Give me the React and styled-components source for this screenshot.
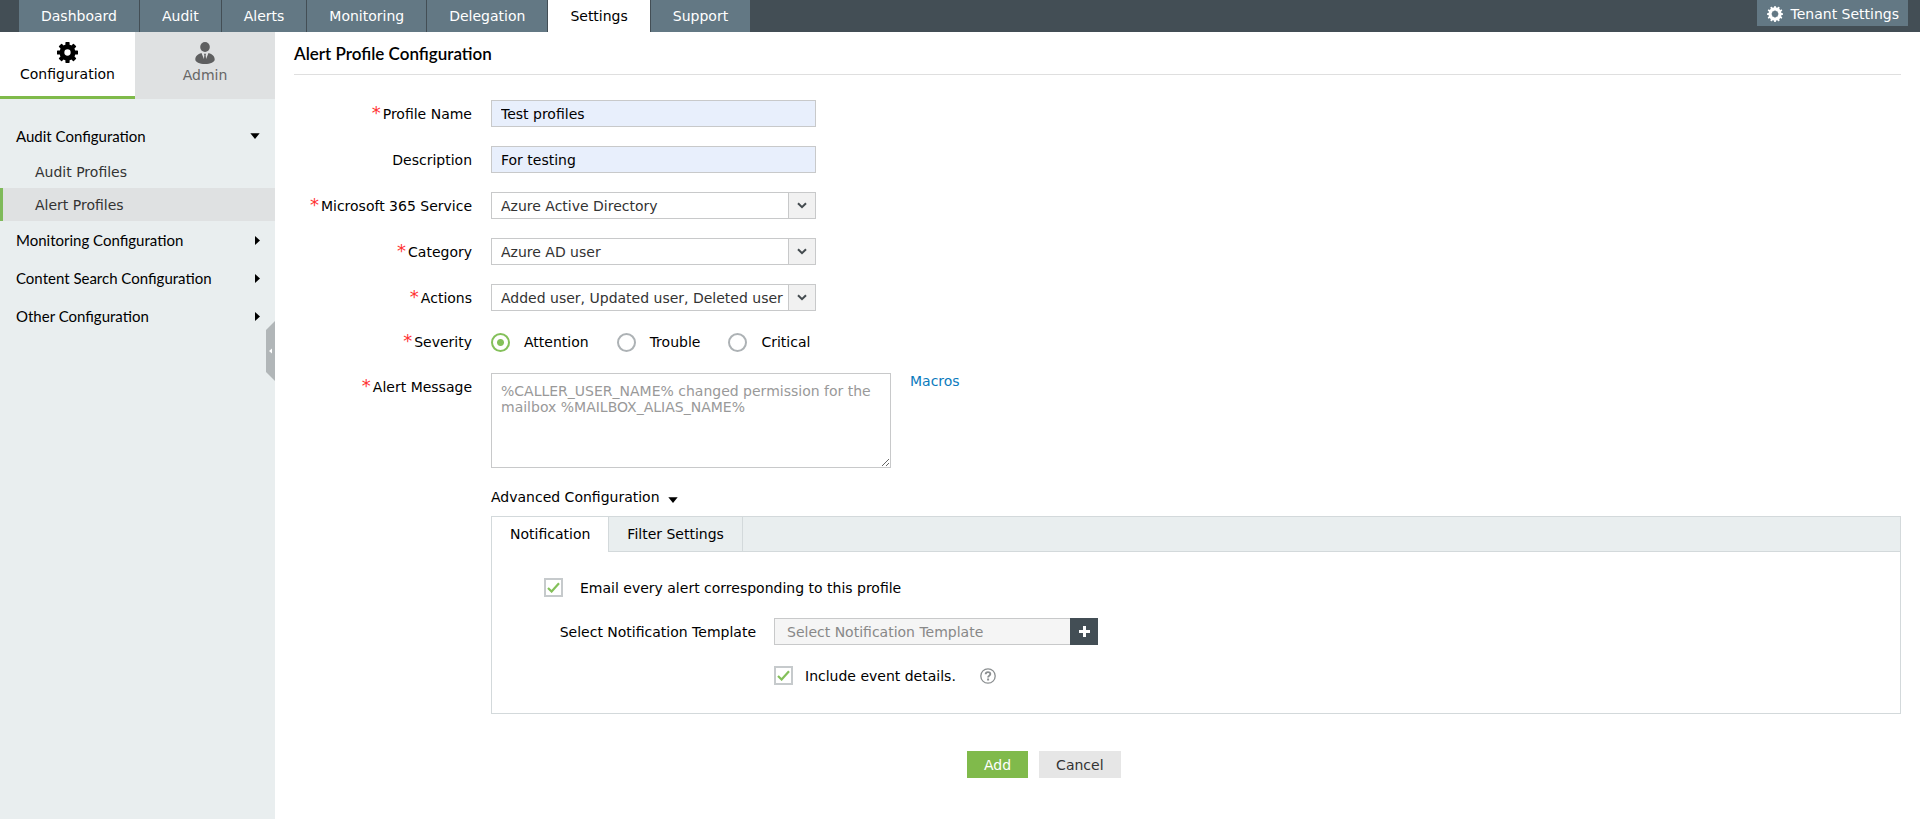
import React, { useState } from "react";
import styled, { createGlobalStyle, css } from "styled-components";

const GlobalStyle = createGlobalStyle`
  *, *::before, *::after { box-sizing: border-box; }
  body {
    margin: 0;
    background: #fff;
    color: #000;
    font: 14px/16px "DejaVu Sans", Verdana, sans-serif;
  }
  button, input, select, textarea { font: inherit; color: inherit; margin: 0; }
  button { border: 0; background: none; padding: 0; cursor: pointer; }
`;

const Page = styled.div`
  display: flex;
  flex-direction: column;
  min-height: 100vh;
`;

const TopBar = styled.header`
  display: flex;
  align-items: flex-start;
  justify-content: space-between;
  height: 32px;
  padding: 0 12px 0 19px;
  background: #434e55;
`;

const MainTabs = styled.nav`
  display: flex;
  gap: 1px;
  height: 100%;
`;

const MainTab = styled.a`
  display: flex;
  align-items: center;
  justify-content: center;
  padding: 0 22px;
  color: ${(p) => (p.$active ? "#000" : "#fff")};
  background: ${(p) => (p.$active ? "#fff" : "#637884")};
  text-decoration: none;
`;

const TenantButton = styled.button`
  display: flex;
  align-items: center;
  gap: 8px;
  height: 26px;
  padding: 2px 9px 0 10px;
  background: #637884;
  color: #fff;
`;

const Body = styled.div`
  display: flex;
  flex: 1;
`;

const Sidebar = styled.aside`
  position: relative;
  flex: 0 0 275px;
  background: #e9eeef;
`;

const SideTabs = styled.div`
  display: grid;
  grid-template-columns: 135px 1fr;
  height: 67px;
`;

const SideTab = styled.button`
  display: flex;
  flex-direction: column;
  align-items: center;
  gap: 3px;
  padding-top: 10px;
  color: #666;
  background: #dfe1e2;
  ${(p) =>
    p.$active &&
    css`
      color: #000;
      background: #fff;
      border-bottom: 3px solid #7fba4a;
    `}
`;

const SideNav = styled.nav`
  padding-top: 18px;
`;

const Group = styled.button`
  display: flex;
  align-items: center;
  justify-content: space-between;
  width: 100%;
  height: 38px;
  padding: 0 15px 0 16px;
  font-family: Lato, sans-serif;
  font-size: 15px;
`;

const SubItem = styled.a`
  display: flex;
  align-items: center;
  height: 33px;
  padding-left: 32px;
  border-left: 3px solid ${(p) => (p.$active ? "#7fba5a" : "transparent")};
  background: ${(p) => (p.$active ? "#dfe1e2" : "transparent")};
  color: #333;
  text-decoration: none;
`;

const Collapse = styled.button`
  position: absolute;
  top: 289px;
  right: 0;
  display: flex;
`;

const Content = styled.main`
  flex: 1;
  min-width: 0;
  padding: 11px 19px 40px;
`;

const Title = styled.h1`
  margin: 0;
  padding-bottom: 9px;
  border-bottom: 1px solid #dfdfdf;
  font: 600 17px/22px Lato, sans-serif;
`;

const Form = styled.form`
  display: flex;
  flex-direction: column;
  gap: 19px;
  margin-top: 25px;
`;

const Row = styled.div`
  display: grid;
  grid-template-columns: 178px minmax(0, 1fr);
  column-gap: 19px;
  align-items: ${(p) => (p.$top ? "start" : "center")};
`;

const Label = styled.label`
  padding-top: ${(p) => (p.$top ? "6px" : "0")};
  text-align: right;
  white-space: nowrap;
`;

const Star = styled.span`
  margin-right: 2px;
  color: #f33;
  font-size: 18px;
  line-height: 1px;
`;

const fieldBox = css`
  height: 27px;
  border: 1px solid #c8c9ca;
  border-radius: 0;
  outline: 0;
`;

const TextInput = styled.input`
  ${fieldBox}
  width: 325px;
  padding: 0 9px;
  background: #e8effc;
`;

const SelectBox = styled.div`
  ${fieldBox}
  display: grid;
  grid-template-columns: minmax(0, 1fr) 27px;
  width: 325px;
`;

const NativeSelect = styled.select`
  grid-area: 1 / 1 / 2 / 3;
  appearance: none;
  width: 100%;
  padding: 0 27px 0 9px;
  border: 0;
  outline: 0;
  background: #fff;
  color: #333;
`;

const SelectArrow = styled.span`
  grid-area: 1 / 2;
  z-index: 1;
  display: flex;
  align-items: center;
  justify-content: center;
  border-left: 1px solid #c8c9ca;
  background: #f1f1f1;
  pointer-events: none;
`;

const Radios = styled.div`
  display: flex;
  align-items: center;
  gap: 28px;
  height: 24px;
`;

const Choice = styled.label`
  display: flex;
  align-items: center;
  gap: ${(p) => p.$gap}px;
`;

const Radio = styled.input`
  appearance: none;
  width: 19px;
  height: 19px;
  border: 2px solid #adb2b5;
  border-radius: 50%;
  background: #fff;
  &:checked {
    border-color: #84c05a;
    background: radial-gradient(circle, #84c05a 3px, #fff 4px);
  }
`;

const MessageLine = styled.div`
  display: flex;
  align-items: flex-start;
  gap: 19px;
`;

const Message = styled.textarea`
  width: 400px;
  height: 95px;
  padding: 9px;
  border: 1px solid #c8c9ca;
  outline: 0;
  line-height: 16px;
  &::placeholder { color: #999; }
`;

const TextLink = styled.a`
  color: #0b7bbd;
  text-decoration: none;
`;

const Advanced = styled.section`
  margin-left: 197px;
`;

const AdvancedToggle = styled.button`
  display: flex;
  align-items: center;
  gap: 8px;
  height: 20px;
  margin-bottom: 9px;
  & > svg { margin-top: 5px; }
`;

const Panel = styled.div`
  border: 1px solid #d3d9db;
`;

const PanelTabs = styled.div`
  display: flex;
  height: 35px;
  background: #e9eeef;
  box-shadow: inset 0 -1px #d3d9db;
`;

const PanelTab = styled.button`
  padding: 0 18px 2px;
  border-right: 1px solid #d3d9db;
  background: ${(p) => (p.$active ? "#fff" : "transparent")};
`;

const PanelBody = styled.div`
  display: flex;
  flex-direction: column;
  gap: 21px;
  padding: 26px 52px 28px;
`;

const TemplateRow = styled.div`
  display: grid;
  grid-template-columns: 212px minmax(0, 1fr);
  column-gap: 18px;
  align-items: center;
`;

const TemplateField = styled.div`
  display: flex;
`;

const TemplateInput = styled.input`
  ${fieldBox}
  width: 296px;
  padding: 0 12px;
  border-right: 0;
  background: #f5f5f5;
  &::placeholder { color: #888; }
`;

const PlusButton = styled.button`
  display: flex;
  align-items: center;
  justify-content: center;
  width: 28px;
  height: 27px;
  background: #434e55;
`;

const IncludeLine = styled.div`
  display: flex;
  grid-column: 2;
  align-items: center;
  gap: 24px;
`;

const TickWrap = styled.span`
  display: grid;
  width: 19px;
  height: 19px;
  place-items: center;
  & > * { grid-area: 1 / 1; }
  & > svg { pointer-events: none; z-index: 1; }
  & > input:not(:checked) + svg { visibility: hidden; }
`;

const TickInput = styled.input`
  appearance: none;
  width: 19px;
  height: 19px;
  border: 2px solid #c6cacc;
  background: #fff;
`;

const Actions = styled.div`
  display: flex;
  gap: 11px;
  margin: 18px 0 0 673px;
`;

const ActionButton = styled.button`
  height: 27px;
  padding: 0 17px;
  color: ${(p) => (p.$primary ? "#fff" : "#333")};
  background: ${(p) => (p.$primary ? "#80ba4b" : "#e6e6e6")};
`;

function Cog({ size, teeth, tooth, body, hole, color }) {
  return (
    <svg width={size} height={size} viewBox="-10 -10 20 20" aria-hidden="true">
      {Array.from({ length: teeth }, (_, i) => (
        <rect
          key={i}
          x={-tooth / 2}
          y="-10"
          width={tooth}
          height="6"
          rx="0.6"
          fill={color}
          transform={`rotate(${(360 / teeth) * i})`}
        />
      ))}
      <circle r={(body + hole) / 2} fill="none" stroke={color} strokeWidth={body - hole} />
    </svg>
  );
}

const Person = () => (
  <svg width="20" height="22" viewBox="0 0 20 22" fill="#5e5f60" aria-hidden="true">
    <ellipse cx="10" cy="5" rx="4.800" ry="5" />
    <path d="M6.500 11C2.600 12 .3 14.400.3 17.500c0 2.600 4.300 4.500 9.700 4.500s9.700-1.900 9.700-4.500c0-3.100-2.300-5.500-6.200-6.500l-2.400 6-.5-4 .6-1.300H8.800l.6 1.300-.5 4z" />
  </svg>
);

const CaretDown = () => (
  <svg width="10" height="6" viewBox="0 0 10 6" aria-hidden="true">
    <path d="M.3.3h9.400L5 6z" fill="#000" />
  </svg>
);

const CaretRight = () => (
  <svg width="5" height="9" viewBox="0 0 5 9" aria-hidden="true">
    <path d="M0 0l5 4.500L0 9z" fill="#000" />
  </svg>
);

const Chevron = () => (
  <svg width="10" height="7" viewBox="0 0 10 7" aria-hidden="true">
    <path d="M1 1.200l4 4 4-4" fill="none" stroke="#444b4f" strokeWidth="2" />
  </svg>
);

const Plus = () => (
  <svg width="11" height="11" viewBox="0 0 11 11" aria-hidden="true">
    <path d="M4 0h3v4h4v3H7v4H4V7H0V4h4z" fill="#fff" />
  </svg>
);

const Help = () => (
  <svg width="16" height="16" viewBox="0 0 16 16" fill="none" stroke="#8b8f91" aria-hidden="true">
    <circle cx="8" cy="8" r="7.200" strokeWidth="1.300" />
    <path d="M5.700 6.300C5.700 3.400 10.300 3.500 10.300 6c0 1.600-2.200 1.700-2.200 3.600" strokeWidth="1.900" />
    <path d="M7.100 11.500h2" strokeWidth="2" />
  </svg>
);

function Tick({ checked, onChange }) {
  return (
    <TickWrap>
      <TickInput type="checkbox" checked={checked} onChange={onChange} />
      <svg width="13" height="11" viewBox="0 0 13 11" aria-hidden="true">
        <path d="M1 6l3.600 3.500L12 1.200" fill="none" stroke="#84c05a" strokeWidth="2.200" />
      </svg>
    </TickWrap>
  );
}

function FieldLabel({ htmlFor, id, required, top, children, as }) {
  return (
    <Label htmlFor={htmlFor} id={id} $top={top} as={as}>
      {required && <Star>*</Star>}
      {children}
    </Label>
  );
}

function SelectRow({ id, label, value }) {
  return (
    <Row>
      <FieldLabel htmlFor={id} required>{label}</FieldLabel>
      <SelectBox>
        <NativeSelect id={id} defaultValue={value}>
          <option>{value}</option>
        </NativeSelect>
        <SelectArrow><Chevron /></SelectArrow>
      </SelectBox>
    </Row>
  );
}

const mainTabs = ["Dashboard", "Audit", "Alerts", "Monitoring", "Delegation", "Settings", "Support"];
const groups = ["Monitoring Configuration", "Content Search Configuration", "Other Configuration"];
const severities = ["Attention", "Trouble", "Critical"];

export default function App() {
  const [severity, setSeverity] = useState("Attention");
  const [email, setEmail] = useState(true);
  const [include, setInclude] = useState(true);

  return (
    <Page>
      <GlobalStyle />
      <TopBar>
        <MainTabs>
          {mainTabs.map((t) => (
            <MainTab key={t} href="#" $active={t === "Settings"}>{t}</MainTab>
          ))}
        </MainTabs>
        <TenantButton type="button">
          <Cog size={16} teeth={12} tooth={2.4} body={8.3} hole={5} color="#fff" />
          Tenant Settings
        </TenantButton>
      </TopBar>
      <Body>
        <Sidebar>
          <SideTabs>
            <SideTab type="button" $active>
              <Cog size={21} teeth={8} tooth={4} body={7.6} hole={3} color="#000" />
              Configuration
            </SideTab>
            <SideTab type="button">
              <Person />
              Admin
            </SideTab>
          </SideTabs>
          <SideNav>
            <Group type="button">Audit Configuration <CaretDown /></Group>
            <SubItem href="#">Audit Profiles</SubItem>
            <SubItem href="#" $active>Alert Profiles</SubItem>
            {groups.map((g) => (
              <Group type="button" key={g}>{g} <CaretRight /></Group>
            ))}
          </SideNav>
          <Collapse type="button" aria-label="Collapse sidebar">
            <svg width="9" height="60" viewBox="0 0 9 60" aria-hidden="true">
              <path d="M9 0v60L0 51V9z" fill="#b1b6b8" />
              <path d="M6 27.500v5L3 30z" fill="#fff" />
            </svg>
          </Collapse>
        </Sidebar>
        <Content>
          <Title>Alert Profile Configuration</Title>
          <Form onSubmit={(e) => e.preventDefault()}>
            <Row>
              <FieldLabel htmlFor="name" required>Profile Name</FieldLabel>
              <TextInput id="name" defaultValue="Test profiles" />
            </Row>
            <Row>
              <FieldLabel htmlFor="desc">Description</FieldLabel>
              <TextInput id="desc" defaultValue="For testing" />
            </Row>
            <SelectRow id="service" label="Microsoft 365 Service" value="Azure Active Directory" />
            <SelectRow id="category" label="Category" value="Azure AD user" />
            <SelectRow id="actions" label="Actions" value="Added user, Updated user, Deleted user" />
            <Row>
              <FieldLabel as="span" id="severity" required>Severity</FieldLabel>
              <Radios role="radiogroup" aria-labelledby="severity">
                {severities.map((s) => (
                  <Choice key={s} $gap={14}>
                    <Radio type="radio" name="severity" checked={severity === s} onChange={() => setSeverity(s)} />
                    {s}
                  </Choice>
                ))}
              </Radios>
            </Row>
            <Row $top>
              <FieldLabel htmlFor="message" required top>Alert Message</FieldLabel>
              <MessageLine>
                <Message
                  id="message"
                  placeholder="%CALLER_USER_NAME% changed permission for the mailbox %MAILBOX_ALIAS_NAME%"
                />
                <TextLink href="#">Macros</TextLink>
              </MessageLine>
            </Row>
            <Advanced>
              <AdvancedToggle type="button">Advanced Configuration <CaretDown /></AdvancedToggle>
              <Panel>
                <PanelTabs>
                  <PanelTab type="button" $active>Notification</PanelTab>
                  <PanelTab type="button">Filter Settings</PanelTab>
                </PanelTabs>
                <PanelBody>
                  <Choice $gap={17}>
                    <Tick checked={email} onChange={() => setEmail(!email)} />
                    Email every alert corresponding to this profile
                  </Choice>
                  <TemplateRow>
                    <Label htmlFor="template">Select Notification Template</Label>
                    <TemplateField>
                      <TemplateInput id="template" placeholder="Select Notification Template" readOnly />
                      <PlusButton type="button" aria-label="Add template"><Plus /></PlusButton>
                    </TemplateField>
                  </TemplateRow>
                  <TemplateRow>
                    <IncludeLine>
                      <Choice $gap={12}>
                        <Tick checked={include} onChange={() => setInclude(!include)} />
                        Include event details.
                      </Choice>
                      <Help />
                    </IncludeLine>
                  </TemplateRow>
                </PanelBody>
              </Panel>
            </Advanced>
            <Actions>
              <ActionButton type="submit" $primary>Add</ActionButton>
              <ActionButton type="button">Cancel</ActionButton>
            </Actions>
          </Form>
        </Content>
      </Body>
    </Page>
  );
}
